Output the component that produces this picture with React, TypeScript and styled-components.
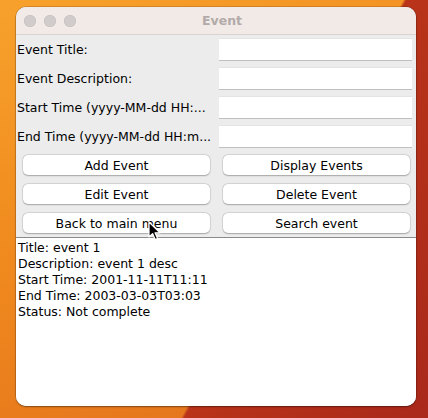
import React from "react";
import styled, { createGlobalStyle } from "styled-components";

const Global = createGlobalStyle`
  html, body { margin: 0; padding: 0; }
  body { width: 428px; height: 418px; overflow: hidden; font-family: "DejaVu Sans", "Noto Sans", sans-serif; }
`;

const Desktop = styled.div`
  position: relative;
  width: 428px;
  height: 418px;
  box-sizing: border-box;
  padding: 7px 12px 12px 16px;
  background:
    linear-gradient(118deg, rgba(0,0,0,0) 0%, rgba(0,0,0,0) 62%, #b93419 62.5%, #a9281a 100%),
    linear-gradient(160deg, #f7a12c 0%, #f08a1e 45%, #e2701c 100%);
`;

const Window = styled.div`
  width: 400px;
  height: 399px;
  border-radius: 10px;
  overflow: hidden;
  display: flex;
  flex-direction: column;
  background: #ececec;
  box-shadow: 0 0 0 0.5px rgba(0,0,0,0.25), 0 1px 2px rgba(0,0,0,0.35);
`;

const TitleBar = styled.div`
  position: relative;
  height: 27px;
  flex: none;
  background: #f1eae7;
  border-bottom: 1px solid #d9d3d1;
  display: flex;
  align-items: center;
  justify-content: center;
`;

const Lights = styled.div`
  position: absolute;
  left: 8px;
  top: 8px;
  display: flex;
  gap: 8px;
`;

const Light = styled.span`
  width: 12px;
  height: 12px;
  border-radius: 50%;
  background: #d1cccc;
  box-shadow: inset 0 0 0 0.5px #c2bcbc;
`;

const Title = styled.div`
  font-family: "DejaVu Sans", "Noto Sans", sans-serif;
  font-weight: 700;
  font-size: 12.5px;
  color: #b3aba9;
  margin-left: 12px;
`;

const Form = styled.div`
  display: grid;
  grid-template-columns: 203px 193px;
  grid-auto-rows: 23px;
  row-gap: 6px;
  padding: 3px 4px 0 0;
`;

const Label = styled.div`
  font-size: 12.5px;
  color: #000;
  padding-left: 1px;
  display: flex;
  align-items: center;
  white-space: nowrap;
  overflow: hidden;
`;

const Field = styled.div`
  background: #fff;
  border-top: 1px solid #e4e4e4;
  border-bottom: 1px solid #bfbfbf;
  box-sizing: border-box;
`;

const Buttons = styled.div`
  display: grid;
  grid-template-columns: 187px 187px;
  grid-auto-rows: 20px;
  column-gap: 13px;
  row-gap: 9px;
  padding: 7px 0 0 7px;
`;

const Button = styled.div`
  background: #fff;
  border-radius: 5px;
  box-shadow: 0 0 0 0.5px rgba(0,0,0,0.12), 0 0.5px 1.5px rgba(0,0,0,0.25);
  display: flex;
  align-items: center;
  justify-content: center;
  font-size: 12.5px;
  color: #000;
`;

const Output = styled.div`
  margin-top: 4px;
  flex: 1;
  background: #fff;
  border-top: 1px solid #8a8a8a;
  padding: 2px 0 0 2px;
  font-size: 12.5px;
  line-height: 16px;
  color: #000;
`;

const Cursor = styled.svg`
  position: absolute;
  left: 148px;
  top: 221px;
`;

const labels = [
  "Event Title:",
  "Event Description:",
  "Start Time (yyyy-MM-dd HH:...",
  "End Time (yyyy-MM-dd HH:m...",
];

const buttons = [
  "Add Event",
  "Display Events",
  "Edit Event",
  "Delete Event",
  "Back to main menu",
  "Search event",
];

const lines = [
  "Title: event 1",
  "Description: event 1 desc",
  "Start Time: 2001-11-11T11:11",
  "End Time: 2003-03-03T03:03",
  "Status: Not complete",
];

export default function App() {
  return (
    <>
      <Global />
      <Desktop>
        <Window>
          <TitleBar>
            <Lights>
              <Light />
              <Light />
              <Light />
            </Lights>
            <Title>Event</Title>
          </TitleBar>
          <Form>
            {labels.map((l) => (
              <React.Fragment key={l}>
                <Label>{l}</Label>
                <Field />
              </React.Fragment>
            ))}
          </Form>
          <Buttons>
            {buttons.map((b) => (
              <Button key={b}>{b}</Button>
            ))}
          </Buttons>
          <Output>
            {lines.map((l) => (
              <div key={l}>{l}</div>
            ))}
          </Output>
        </Window>
        <Cursor width="14" height="20" viewBox="0 0 14 20">
          <path d="M1 1 L1 16 L4.6 12.6 L7.2 18.6 L9.6 17.6 L7 11.8 L12 11.8 Z" fill="#000" stroke="#fff" strokeWidth="1.2" strokeLinejoin="round" />
        </Cursor>
      </Desktop>
    </>
  );
}
